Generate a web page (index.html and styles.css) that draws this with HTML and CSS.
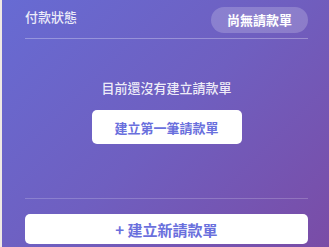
FILE: index.html
```html
<!DOCTYPE html>
<html lang="zh-Hant">
<head>
    <meta charset="UTF-8">
    <meta name="viewport" content="width=device-width, initial-scale=1.0">
    <title>付款狀態</title>
    <link rel="stylesheet" href="styles.css">
</head>
<body>
    <div class="payment-card">
        <div class="card-header">
            <span class="card-title">付款狀態</span>
            <span class="status-badge">尚無請款單</span>
        </div>

        <div class="empty-state">
            <p class="empty-text">目前還沒有建立請款單</p>
            <button class="btn-first">建立第一筆請款單</button>
        </div>

        <div class="card-footer">
            <button class="btn-new">+ 建立新請款單</button>
        </div>
    </div>
</body>
</html>
```

FILE: styles.css
```css
body {
    margin: 0;
    background: #efe9e4;
    font-family: "Noto Sans CJK TC", "Noto Sans", sans-serif;
    overflow: hidden;
}

.payment-card {
    margin-left: 2px;
    width: 329px;
    height: 247px;
    box-sizing: border-box;
    padding: 7px 23px 0 23px;
    background: linear-gradient(135deg, #676bd3 0%, #6f5fc0 50%, #7a4ca6 100%);
    color: #fff;
}

.card-header {
    display: flex;
    justify-content: space-between;
    align-items: flex-start;
    padding-bottom: 5px;
    border-bottom: 1px solid rgba(255, 255, 255, 0.3);
}

.card-title {
    font-size: 13px;
    line-height: 19px;
    font-weight: 500;
    color: rgba(255, 255, 255, 0.88);
}

.status-badge {
    height: 26px;
    line-height: 26px;
    padding: 0 16px;
    border-radius: 13px;
    background: rgba(255, 255, 255, 0.2);
    font-size: 13px;
    font-weight: 700;
}

.empty-state {
    display: flex;
    flex-direction: column;
    align-items: center;
    padding-top: 39px;
    padding-bottom: 54px;
    border-bottom: 1px solid rgba(255, 255, 255, 0.2);
}

.empty-text {
    margin: 0 0 12px;
    font-size: 13px;
    line-height: 20px;
    font-weight: 500;
    color: rgba(255, 255, 255, 0.9);
}

.btn-first {
    width: 150px;
    height: 34px;
    border: none;
    border-radius: 5px;
    background: #fff;
    color: #6a70dd;
    font-family: inherit;
    font-size: 13px;
    font-weight: 700;
    cursor: pointer;
}

.card-footer {
    padding-top: 15px;
}

.btn-new {
    width: 100%;
    height: 30px;
    border: none;
    border-radius: 5px;
    background: #fff;
    color: #6a70dd;
    font-family: inherit;
    font-size: 15px;
    font-weight: 700;
    cursor: pointer;
}
```
